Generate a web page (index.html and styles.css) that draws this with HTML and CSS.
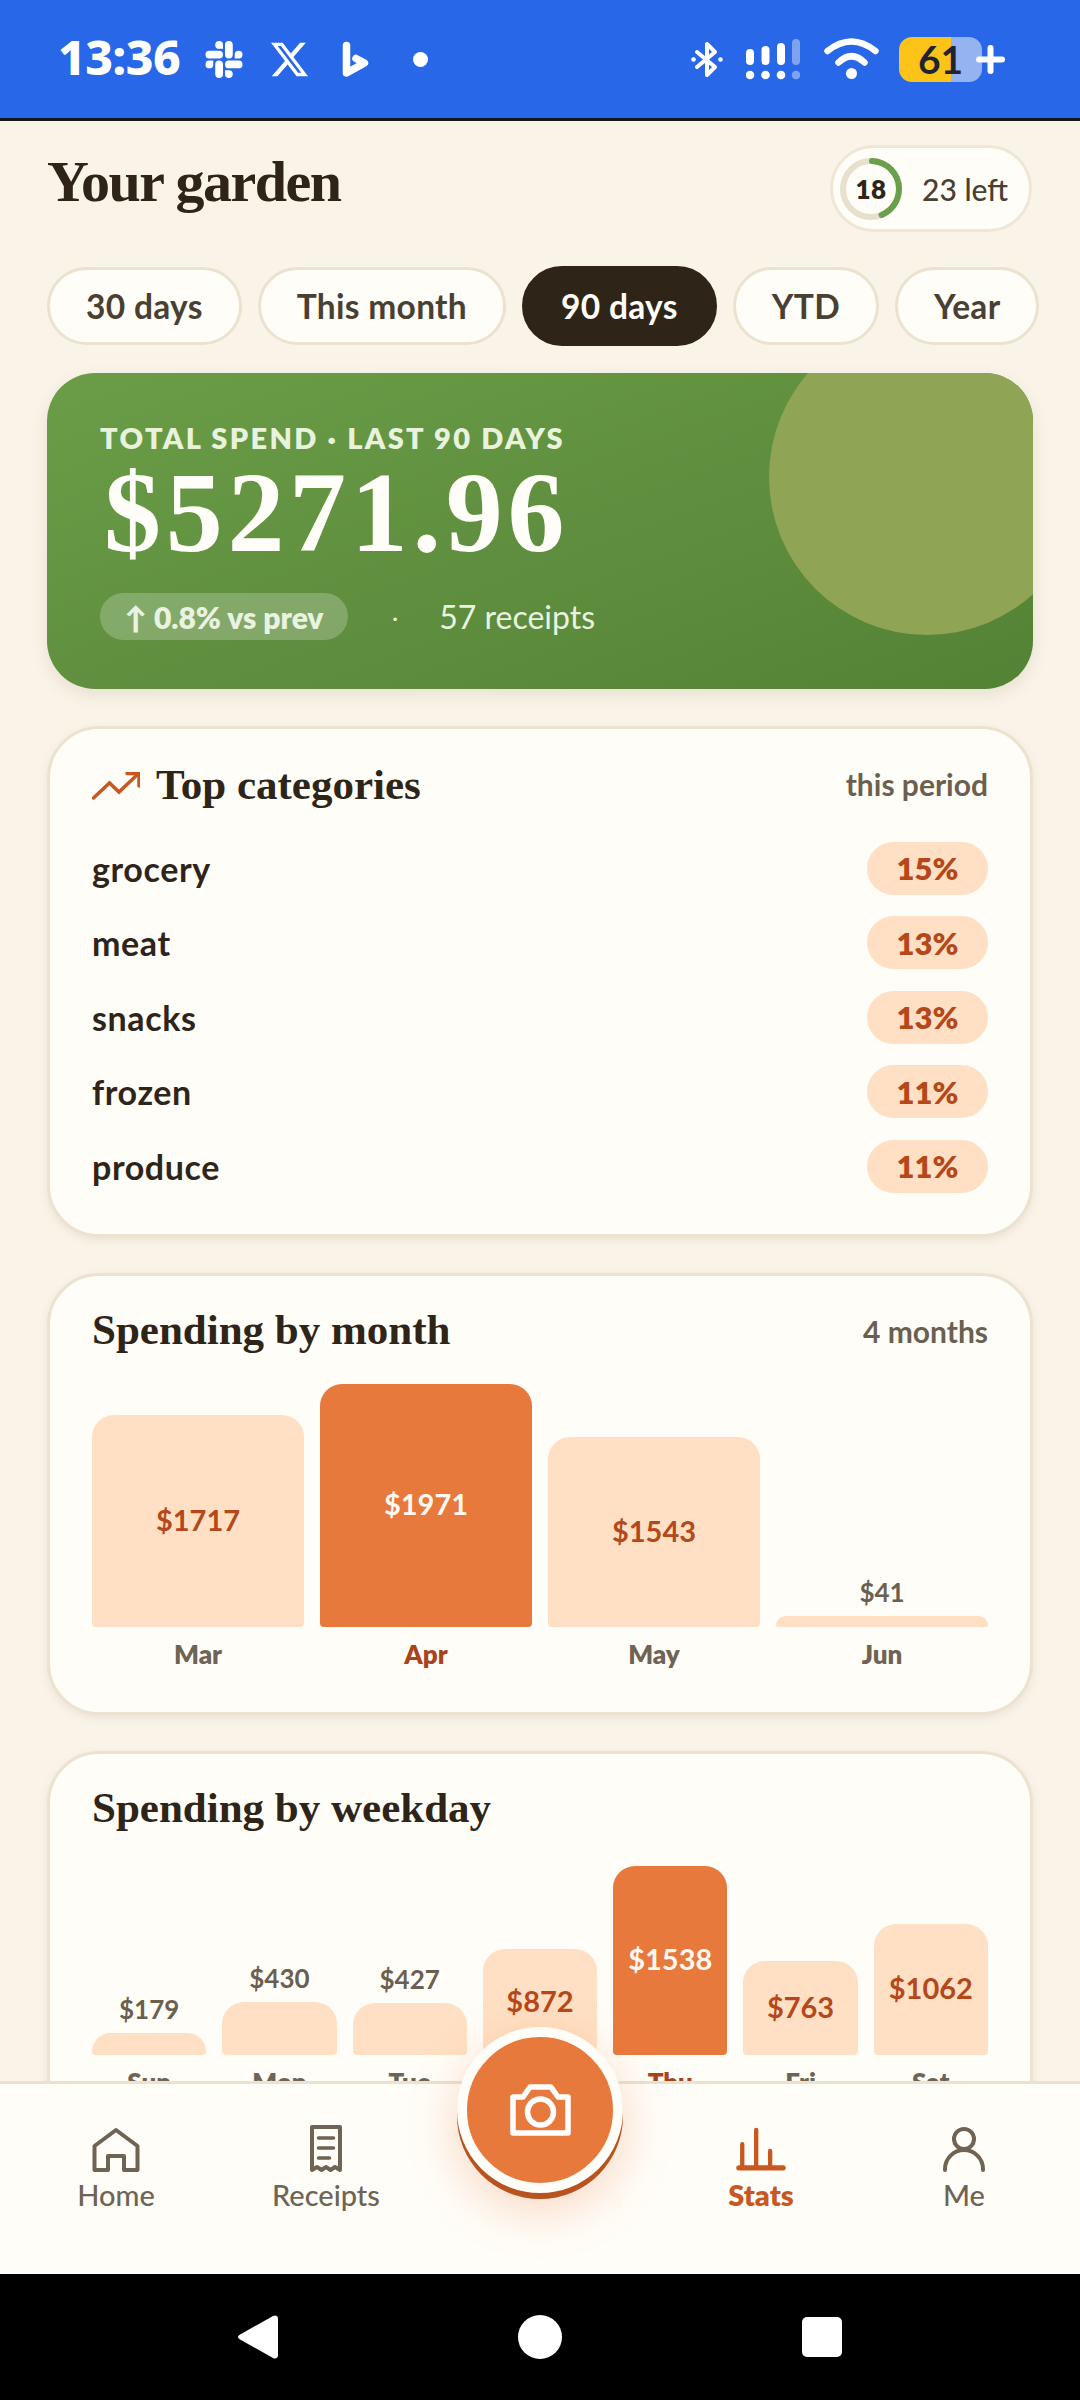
FILE: index.html
```html
<!DOCTYPE html>
<html lang="en">

<head>
    <meta charset="UTF-8">
    <meta name="viewport" content="width=device-width, initial-scale=1.0">
    <title>Your garden</title>
    <link rel="stylesheet" href="styles.css">
</head>

<body>
    <div class="statusbar">
        <div class="status-left">
            <span class="clock">13:36</span>
            <svg class="ic-slack" viewBox="0 0 24 24" fill="#fff">
                <path d="M5.042 15.165a2.528 2.528 0 0 1-2.52 2.523A2.528 2.528 0 0 1 0 15.165a2.527 2.527 0 0 1 2.522-2.52h2.52v2.52zM6.313 15.165a2.527 2.527 0 0 1 2.521-2.52 2.527 2.527 0 0 1 2.521 2.52v6.313A2.528 2.528 0 0 1 8.834 24a2.528 2.528 0 0 1-2.521-2.522v-6.313zM8.834 5.042a2.528 2.528 0 0 1-2.521-2.52A2.528 2.528 0 0 1 8.834 0a2.528 2.528 0 0 1 2.521 2.522v2.52H8.834zM8.834 6.313a2.528 2.528 0 0 1 2.521 2.521 2.528 2.528 0 0 1-2.521 2.521H2.522A2.528 2.528 0 0 1 0 8.834a2.528 2.528 0 0 1 2.522-2.521h6.312zM18.956 8.834a2.528 2.528 0 0 1 2.522-2.521A2.528 2.528 0 0 1 24 8.834a2.528 2.528 0 0 1-2.522 2.521h-2.522V8.834zM17.688 8.834a2.528 2.528 0 0 1-2.523 2.521 2.527 2.527 0 0 1-2.52-2.521V2.522A2.527 2.527 0 0 1 15.165 0a2.528 2.528 0 0 1 2.523 2.522v6.312zM15.165 18.956a2.528 2.528 0 0 1 2.523 2.522A2.528 2.528 0 0 1 15.165 24a2.527 2.527 0 0 1-2.52-2.522v-2.522h2.52zM15.165 17.688a2.527 2.527 0 0 1-2.52-2.523 2.526 2.526 0 0 1 2.52-2.52h6.313A2.527 2.527 0 0 1 24 15.165a2.528 2.528 0 0 1-2.522 2.523h-6.313z" />
            </svg>
            <svg class="ic-x" viewBox="0 0 24 24" fill="#fff">
                <path d="M18.901 1.153h3.68l-8.04 9.19L24 22.846h-7.406l-5.8-7.584-6.638 7.584H.474l8.6-9.83L0 1.154h7.594l5.243 6.932ZM17.61 20.644h2.039L6.486 3.24H4.298Z" />
            </svg>
            <svg class="ic-bing" viewBox="0 0 27 37" fill="none" stroke="#fff" stroke-width="7.500" stroke-linejoin="round" stroke-linecap="round">
                <path d="M4.500 4.500V32L22.500 22 14 17.500" />
            </svg>
            <span class="dot"></span>
        </div>
        <div class="status-right">
            <svg class="ic-bt" viewBox="0 0 32 37" fill="none" stroke="#fff" stroke-width="4" stroke-linejoin="round" stroke-linecap="round">
                <path d="M6 11l18 15-8 8V3l8 8L6 26" />
                <circle cx="2.500" cy="18.500" r="2.300" fill="#fff" stroke="none" />
                <circle cx="29.500" cy="18.500" r="2.300" fill="#fff" stroke="none" />
            </svg>
            <svg class="ic-signal" viewBox="0 0 54 41" fill="#fff">
                <rect x="0" y="10" width="8" height="16" rx="4" />
                <rect x="15.500" y="7" width="8" height="19" rx="4" />
                <rect x="31" y="4" width="8" height="22" rx="4" />
                <rect x="46" y="0" width="8" height="26" rx="4" opacity="0.4" />
                <circle cx="4" cy="36" r="4.300" />
                <circle cx="19.500" cy="36" r="4.300" />
                <circle cx="35" cy="36" r="4.300" />
                <circle cx="50" cy="36" r="4.300" opacity="0.4" />
            </svg>
            <svg class="ic-wifi" viewBox="0 0 55 42" fill="none" stroke="#fff" stroke-width="6.500" stroke-linecap="round">
                <path d="M3.500 13Q27.500-6 51.500 13" />
                <path d="M14.500 24.500Q27.500 12 40.500 24.500" />
                <circle cx="27.500" cy="35.500" r="5.500" fill="#fff" stroke="none" />
            </svg>
            <div class="battery"><span>61</span></div>
            <svg class="ic-plus" viewBox="0 0 29 29" stroke="#fff" stroke-width="6" stroke-linecap="round">
                <path d="M3 14.500h23M14.500 3v23" />
            </svg>
        </div>
    </div>

    <div class="screen">
        <div class="topline">
            <h1>Your garden</h1>
            <div class="quota">
                <svg class="ring" viewBox="0 0 62 62" fill="none" stroke-width="6">
                    <circle cx="31" cy="31" r="28" stroke="#e8dfcd" />
                    <circle cx="31" cy="31" r="28" stroke="#6a9f4b" stroke-linecap="round" stroke-dasharray="76 176" transform="rotate(-88 31 31)" />
                </svg>
                <b class="ring-num">18</b>
                <span>23 left</span>
            </div>
        </div>

        <div class="chips">
            <div class="chip">30 days</div>
            <div class="chip">This month</div>
            <div class="chip on">90 days</div>
            <div class="chip">YTD</div>
            <div class="chip">Year</div>
        </div>

        <div class="hero">
            <div class="blob"></div>
            <div class="hero-label">TOTAL SPEND · LAST 90 DAYS</div>
            <div class="hero-amount">$5271.96</div>
            <div class="hero-meta">
                <span class="hero-pill">↑ 0.8% vs prev</span>
                <span class="hero-sep">·</span>
                <span class="hero-count">57 receipts</span>
            </div>
        </div>

        <div class="card">
            <div class="card-head">
                <h2>
                    <svg class="ic-trend" viewBox="0 0 48 28" fill="none" stroke="#c8581f" stroke-width="3.500" stroke-linecap="round">
                        <path d="M1.500 26l16-15 9.500 9L46 2" />
                        <path d="M35 1.500h12V14" />
                    </svg>
                    Top categories
                </h2>
                <span class="card-note">this period</span>
            </div>
            <div class="cat-row"><span>grocery</span><b>15%</b></div>
            <div class="cat-row"><span>meat</span><b>13%</b></div>
            <div class="cat-row"><span>snacks</span><b>13%</b></div>
            <div class="cat-row"><span>frozen</span><b>11%</b></div>
            <div class="cat-row"><span>produce</span><b>11%</b></div>
        </div>

        <div class="card">
            <div class="card-head">
                <h2>Spending by month</h2>
                <span class="card-note">4 months</span>
            </div>
            <div class="bars months">
                <div class="col"><div class="bar" style="height:212px"><em>$1717</em></div><label>Mar</label></div>
                <div class="col top"><div class="bar" style="height:243px"><em>$1971</em></div><label>Apr</label></div>
                <div class="col"><div class="bar" style="height:190px"><em>$1543</em></div><label>May</label></div>
                <div class="col"><i>$41</i><div class="bar" style="height:11px"></div><label>Jun</label></div>
            </div>
        </div>

        <div class="card">
            <div class="card-head">
                <h2>Spending by weekday</h2>
            </div>
            <div class="bars days">
                <div class="col"><i>$179</i><div class="bar" style="height:22px"></div><label>Sun</label></div>
                <div class="col"><i>$430</i><div class="bar" style="height:53px"></div><label>Mon</label></div>
                <div class="col"><i>$427</i><div class="bar" style="height:52px"></div><label>Tue</label></div>
                <div class="col"><div class="bar" style="height:106px"><em>$872</em></div><label>Wed</label></div>
                <div class="col top"><div class="bar" style="height:189px"><em>$1538</em></div><label>Thu</label></div>
                <div class="col"><div class="bar" style="height:94px"><em>$763</em></div><label>Fri</label></div>
                <div class="col"><div class="bar" style="height:131px"><em>$1062</em></div><label>Sat</label></div>
            </div>
        </div>
    </div>

    <div class="nav">
        <div class="nav-item">
            <svg viewBox="0 0 50 50" fill="none" stroke="#6f6354" stroke-width="4" stroke-linejoin="round">
                <path d="M3.500 45V21L25 5l21.500 16v24H33V31H17v14Z" />
            </svg>
            <span>Home</span>
        </div>
        <div class="nav-item">
            <svg viewBox="0 0 50 50" fill="none" stroke="#6f6354" stroke-width="4" stroke-linejoin="round" stroke-linecap="round">
                <path d="M11 2h28v43l-5-3-4.500 3-4.500-3-4.500 3-4.500-3-5 3Z" />
                <path d="M17.500 13h15M17.500 23h15M17.500 33h11" stroke-width="3.500" />
            </svg>
            <span>Receipts</span>
        </div>
        <div class="nav-gap"></div>
        <div class="nav-item active">
            <svg viewBox="0 0 52 50" fill="none" stroke="#c8581f" stroke-width="4.500" stroke-linecap="round">
                <path d="M6.500 19v24M21 4v39M35.500 26v17" />
                <path d="M3 43.500h46" stroke-width="5.500" />
            </svg>
            <span>Stats</span>
        </div>
        <div class="nav-item">
            <svg viewBox="0 0 50 50" fill="none" stroke="#6f6354" stroke-width="4" stroke-linecap="round">
                <circle cx="25" cy="14" r="10" />
                <path d="M6 45v-1a19 19 0 0 1 38 0v1" />
            </svg>
            <span>Me</span>
        </div>
        <div class="fab">
            <svg viewBox="0 0 61 52" fill="none" stroke="#fff" stroke-width="5.500" stroke-linejoin="round">
                <path d="M3 13H13L20 3H41L48 13H58V49H3Z" />
                <circle cx="30.500" cy="28" r="13" />
            </svg>
        </div>
    </div>

    <div class="sysbar">
        <svg class="sys-back" viewBox="0 0 40 46" fill="#fff">
            <path d="M35 2c2-1.200 5-.5 5 2.500v37c0 3-3 3.700-5 2.500L3 26c-4-2-4-4 0-6Z" />
        </svg>
        <span class="sys-home"></span>
        <span class="sys-recent"></span>
    </div>
</body>

</html>
```

FILE: styles.css
```css
* {
    box-sizing: border-box;
}

html,
body {
    margin: 0;
    padding: 0;
}

body {
    width: 1080px;
    height: 2400px;
    display: flex;
    flex-direction: column;
    overflow: hidden;
    background: #faf3e8;
    color: #2e2418;
    font-family: "Lato", "Noto Sans", sans-serif;
}

/* status bar */
.statusbar {
    height: 121px;
    flex: none;
    display: flex;
    justify-content: space-between;
    align-items: center;
    padding: 0 75px 0 58px;
    background: #2867e8;
    border-bottom: 3px solid #14161c;
    color: white;
}

.status-left,
.status-right {
    display: flex;
    align-items: center;
}

.clock {
    width: 147px;
    margin-top: -5px;
    font-family: "Noto Sans", sans-serif;
    font-size: 48px;
    font-weight: 800;
    letter-spacing: -0.5px;
}

.ic-slack {
    width: 38px;
    height: 37px;
    margin-right: 27px;
}

.ic-x {
    width: 39px;
    height: 37px;
    margin-right: 33px;
}

.ic-bing {
    width: 27px;
    height: 37px;
    margin-right: 44px;
}

.dot {
    width: 15px;
    height: 15px;
    border-radius: 50%;
    background: white;
}

.ic-bt {
    width: 32px;
    height: 37px;
    margin-right: 23px;
}

.ic-signal {
    width: 54px;
    height: 41px;
    margin-right: 24px;
}

.ic-wifi {
    width: 55px;
    height: 42px;
    margin-right: 20px;
}

.battery {
    width: 83px;
    height: 45px;
    border-radius: 13px;
    display: flex;
    justify-content: center;
    align-items: center;
    background: linear-gradient(90deg, #fcc419 63%, #94b3f0 63%);
    color: #1f2430;
    font-size: 39px;
    font-weight: 700;
}

.ic-plus {
    width: 29px;
    height: 29px;
    margin-left: -6px;
}

/* page */
.screen {
    flex: 1;
    min-height: 0;
    overflow: hidden;
    padding: 24px 46px 0;
}

.topline {
    display: flex;
    justify-content: space-between;
    align-items: center;
    height: 87px;
}

h1 {
    margin: -14px 0 0 1px;
    font-family: "Liberation Serif", serif;
    font-size: 58px;
    font-weight: 700;
    letter-spacing: -1.5px;
    color: #2e2418;
}

.quota {
    position: relative;
    width: 202px;
    height: 87px;
    display: flex;
    align-items: center;
    padding-left: 7px;
    margin-right: 2px;
    border: 3px solid #efe6d6;
    border-radius: 44px;
    background: #fffdf8;
    font-size: 30px;
    font-weight: 500;
    color: #4a3f33;
}

.ring {
    width: 62px;
    height: 62px;
    margin-right: 20px;
}

.ring-num {
    position: absolute;
    left: 7px;
    width: 62px;
    text-align: center;
    font-size: 26px;
    font-weight: 800;
    letter-spacing: 0.5px;
    color: #2e2418;
}

.chips {
    display: flex;
    align-items: center;
    gap: 16px;
    margin: 35px 0 0 1px;
    width: 1010px;
    height: 78px;
}

.chip {
    height: 78px;
    padding: 0 36px;
    display: flex;
    align-items: center;
    border: 3px solid #ebe2d0;
    border-radius: 40px;
    background: #fffdf8;
    font-size: 33.500px;
    font-weight: 700;
    letter-spacing: 0.3px;
    color: #4a3f33;
}

.chip.on {
    height: 80px;
    border-color: #2e2418;
    background: #2e2418;
    color: #fffdf8;
}

.hero {
    position: relative;
    overflow: hidden;
    height: 316px;
    margin: 28px 1px 0;
    padding: 48px 53px 0;
    border-radius: 48px;
    background: linear-gradient(160deg, #6b9d48, #548235);
    color: white;
    box-shadow: 0 6px 16px rgba(90, 110, 50, 0.12);
}

.blob {
    position: absolute;
    top: -54px;
    right: -52px;
    width: 316px;
    height: 316px;
    border-radius: 50%;
    background: #8fa555;
}

.hero-label {
    position: relative;
    font-size: 29px;
    font-weight: 800;
    letter-spacing: 2.300px;
    line-height: 34px;
    color: #e8f2dd;
}

.hero-amount {
    position: relative;
    margin: 2px 0 0 4px;
    font-family: "Liberation Serif", serif;
    font-size: 114px;
    font-weight: 700;
    line-height: 112px;
    letter-spacing: 4.700px;
    color: #fffdf8;
}

.hero-meta {
    position: relative;
    display: flex;
    align-items: center;
    margin-top: 24px;
    font-size: 32px;
    color: #eaf3e0;
}

.hero-pill {
    width: 248px;
    height: 47px;
    display: flex;
    justify-content: center;
    align-items: center;
    border-radius: 24px;
    background: rgba(255, 255, 255, 0.22);
    font-size: 30px;
    font-weight: 800;
}

.hero-sep {
    margin: 0 41px 0 44px;
    font-size: 24px;
}

.card {
    margin: 36px 1px 0;
    padding: 25px 42px 0;
    border: 3px solid #ece2d0;
    border-radius: 52px;
    background: #fffdf8;
    box-shadow: 0 3px 8px rgba(110, 90, 50, 0.1);
}

.hero + .card {
    margin-top: 37px;
}

.card-head {
    display: flex;
    justify-content: space-between;
    align-items: center;
    height: 60px;
}

.card + .card h2 {
    margin-top: -3px;
}

h2 {
    margin: 0;
    display: flex;
    align-items: center;
    gap: 16px;
    font-family: "Liberation Serif", serif;
    font-size: 43px;
    font-weight: 700;
    color: #2e2418;
}

.ic-trend {
    width: 48px;
    height: 28px;
    margin-top: 4px;
}

.card-note {
    font-size: 30px;
    font-weight: 700;
    color: #6b5f50;
}

.cat-row {
    display: flex;
    justify-content: space-between;
    align-items: center;
    height: 74.500px;
    font-size: 34px;
    font-weight: 700;
    letter-spacing: 0.6px;
    color: #2e2418;
}

.cat-row:nth-child(2) {
    margin-top: 17px;
}

.cat-row:last-child {
    margin-bottom: 30px;
}

.cat-row b {
    width: 121px;
    height: 53px;
    display: flex;
    justify-content: center;
    align-items: center;
    border-radius: 27px;
    background: #ffe0c4;
    font-size: 31px;
    font-weight: 800;
    letter-spacing: 0;
    color: #b5481a;
}

/* bar charts */
.bars {
    display: flex;
    align-items: flex-end;
    gap: 16px;
}

.bars.months {
    height: 310px;
    margin-bottom: 41px;
}

.bars.days {
    height: 260px;
    margin-bottom: 41px;
}

.col {
    flex: 1;
    min-width: 0;
    text-align: center;
}

.bar {
    display: flex;
    justify-content: center;
    align-items: center;
    border-radius: 22px 22px 4px 4px;
    background: #ffe0c4;
}

.bar em {
    margin-top: -3px;
    font-style: normal;
    font-size: 29px;
    font-weight: 700;
    color: #b5481a;
}

.col.top .bar {
    background: #e8793d;
}

.col.top .bar em {
    color: #fff8f0;
}

.col i {
    display: block;
    margin-bottom: 8px;
    font-style: normal;
    font-size: 26px;
    font-weight: 700;
    color: #6b5f50;
}

.col label {
    display: block;
    margin-top: 12px;
    height: 32px;
    line-height: 30px;
    font-size: 26px;
    font-weight: 800;
    color: #6f6354;
}

.col.top label {
    color: #a8431a;
}

/* bottom nav */
.nav {
    position: relative;
    flex: none;
    height: 193px;
    display: grid;
    grid-template-columns: 212px 208px 234px 194px 212px;
    padding: 41px 0 0 10px;
    border-top: 3px solid #ebe2d0;
    background: #fffdf8;
}

.nav-item {
    display: flex;
    flex-direction: column;
    align-items: center;
    font-size: 29px;
    font-weight: 500;
    color: #6f6354;
}

.nav-item svg {
    width: 50px;
    height: 50px;
    margin-bottom: 2px;
}

.nav-item.active {
    font-weight: 800;
    color: #c8581f;
}

.fab {
    position: absolute;
    top: -57px;
    left: 457px;
    width: 166px;
    height: 166px;
    display: flex;
    justify-content: center;
    align-items: center;
    border: 10px solid #fffdf8;
    border-radius: 50%;
    background: #e8793d;
    box-shadow: 0 6px 0 #b8521e, 0 16px 50px rgba(232, 121, 61, 0.3);
}

.fab svg {
    width: 61px;
    height: 52px;
}

/* android buttons */
.sysbar {
    flex: none;
    height: 126px;
    display: flex;
    align-items: center;
    justify-content: center;
    gap: 240px;
    background: black;
}

.sys-back {
    width: 40px;
    height: 46px;
}

.sys-home {
    width: 44px;
    height: 44px;
    border-radius: 50%;
    background: white;
}

.sys-recent {
    width: 40px;
    height: 40px;
    border-radius: 5px;
    background: white;
}
```
